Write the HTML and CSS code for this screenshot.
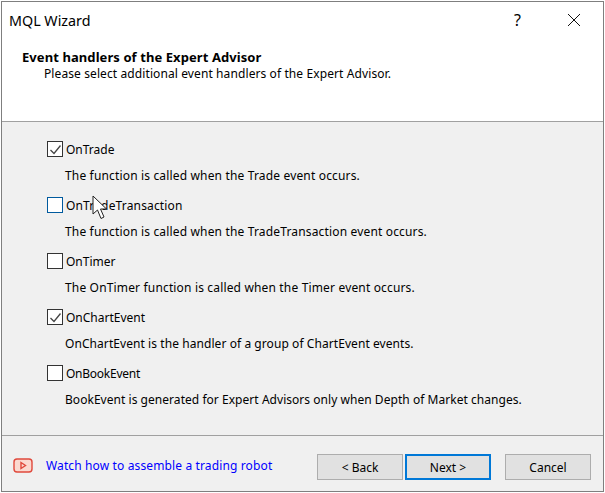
FILE: index.html
```html
<!DOCTYPE html>
<html lang="en">
<head>
    <meta charset="UTF-8">
    <meta name="viewport" content="width=device-width, initial-scale=1.0">
    <title>MQL Wizard</title>
    <link rel="stylesheet" href="styles.css">
</head>
<body>
    <div class="window">
        <div class="top">
            <div class="titlebar">
                <span class="title">MQL Wizard</span>
                <span class="help">?</span>
                <svg class="close" width="14" height="14" viewBox="0 0 14 14">
                    <path d="M1 1L13 13M13 1L1 13" stroke="#111" stroke-width="1" fill="none"/>
                </svg>
            </div>
            <div class="heading">
                <h1>Event handlers of the Expert Advisor</h1>
                <p>Please select additional event handlers of the Expert Advisor.</p>
            </div>
        </div>
        <div class="options">
            <div class="option">
                <label class="check-row">
                    <span class="box checked">
                        <svg width="13" height="13" viewBox="0 0 13 13"><path d="M1.5 7L5 10.5L11.5 2.5" stroke="#444" stroke-width="1.3" fill="none"/></svg>
                    </span>
                    OnTrade
                </label>
                <p class="wide">The function is called when the Trade event occurs.</p>
            </div>
            <div class="option">
                <label class="check-row wide">
                    <span class="box hover"></span>
                    OnTradeTransaction
                </label>
                <p class="wide">The function is called when the TradeTransaction event occurs.</p>
                <svg class="cursor" width="16" height="25" viewBox="0 0 16 25">
                    <path d="M1 1V19L5.5 15L9 23.5L12 22L8.5 14H14.5Z" fill="#fff" stroke="#222" stroke-width="1"/>
                </svg>
            </div>
            <div class="option">
                <label class="check-row">
                    <span class="box"></span>
                    OnTimer
                </label>
                <p class="wide">The OnTimer function is called when the Timer event occurs.</p>
            </div>
            <div class="option">
                <label class="check-row">
                    <span class="box checked">
                        <svg width="13" height="13" viewBox="0 0 13 13"><path d="M1.5 7L5 10.5L11.5 2.5" stroke="#444" stroke-width="1.3" fill="none"/></svg>
                    </span>
                    OnChartEvent
                </label>
                <p class="mid">OnChartEvent is the handler of a group of ChartEvent events.</p>
            </div>
            <div class="option">
                <label class="check-row tight">
                    <span class="box"></span>
                    OnBookEvent
                </label>
                <p class="slim">BookEvent is generated for Expert Advisors only when Depth of Market changes.</p>
            </div>
        </div>
        <div class="footer">
            <svg class="yt" width="20" height="15" viewBox="0 0 20 15">
                <rect x="1" y="1" width="18" height="13" rx="3" fill="#fbd9d0" stroke="#e0493c" stroke-width="1.4"/>
                <path d="M8 4.5L12.5 7.5L8 10.5Z" fill="#fbd9d0" stroke="#e0493c" stroke-width="1.4"/>
            </svg>
            <a class="link" href="#">Watch how to assemble a trading robot</a>
            <button class="btn back">&lt; Back</button>
            <button class="btn next">Next &gt;</button>
            <button class="btn cancel">Cancel</button>
        </div>
    </div>
</body>
</html>
```

FILE: styles.css
```css
html, body {
    margin: 0;
    padding: 0;
}
body {
    font-family: "Noto Sans", sans-serif;
    font-size: 12px;
    color: #000;
    background-color: #fff;
}
.window {
    width: 603px;
    height: 491px;
    margin: 1px;
    box-sizing: border-box;
    border: 1px solid #7f7f7f;
    display: flex;
    flex-direction: column;
    background-color: #f0f0f0;
}
.top {
    height: 119px;
    background-color: #fff;
    border-bottom: 1px solid #a0a0a0;
    flex-shrink: 0;
}
.titlebar {
    height: 36px;
    display: flex;
    align-items: center;
    padding-left: 7px;
}
.title {
    font-size: 14.3px;
    flex: 1;
}
.help {
    font-size: 16px;
    margin-right: 46px;
}
.close {
    margin-right: 22px;
}
.heading {
    padding: 11px 0 0 20px;
}
h1 {
    margin: 0;
    font-size: 13px;
    font-weight: bold;
    line-height: 16px;
    letter-spacing: 0.08px;
}
.heading p {
    margin: 1px 0 0 22px;
    line-height: 16px;
    letter-spacing: 0.1px;
}
.options {
    flex: 1;
    padding: 18px 0 0 45px;
    border-bottom: 1px solid #a0a0a0;
}
.option {
    height: 56px;
    position: relative;
}
.check-row {
    display: flex;
    align-items: center;
    gap: 3px;
    height: 18px;
}
.box {
    width: 14px;
    height: 14px;
    border: 1px solid #333;
    background-color: #fff;
    display: flex;
    align-items: center;
    justify-content: center;
}
.box.hover {
    border-color: #005a9e;
}
.option p {
    margin: 10px 0 0 18px;
    line-height: 16px;
}
.wide {
    letter-spacing: 0.16px;
}
.mid {
    letter-spacing: 0.07px;
}
.slim {
    letter-spacing: 0.04px;
}
.tight {
    letter-spacing: -0.25px;
}
.cursor {
    position: absolute;
    left: 45px;
    top: -1px;
}
.footer {
    height: 55px;
    box-sizing: border-box;
    display: flex;
    align-items: center;
    flex-shrink: 0;
    padding: 7px 0 0 11px;
}
.yt {
    margin-right: 13px;
    margin-bottom: 4px;
}
.link {
    color: #0000ff;
    text-decoration: none;
    flex: 1;
    letter-spacing: 0.13px;
    margin-bottom: 4px;
}
.btn {
    width: 86px;
    height: 26px;
    box-sizing: border-box;
    font: inherit;
    color: #000;
    background-color: #e1e1e1;
    border: 1px solid #adadad;
    padding: 0;
}
.next {
    margin-left: 2px;
    border: 2px solid #0078d7;
}
.cancel {
    margin-left: 14px;
    margin-right: 12px;
}
```
